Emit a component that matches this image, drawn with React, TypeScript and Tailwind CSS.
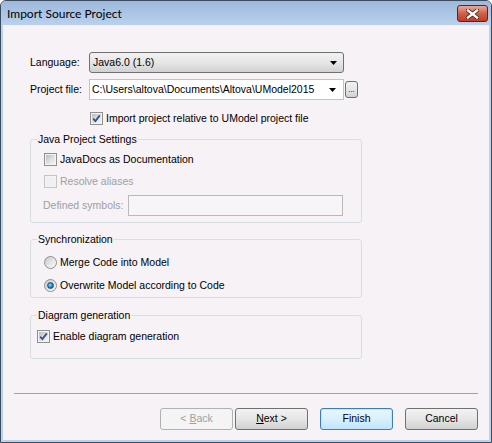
import type { ReactNode } from "react";

const btnFace =
  "bg-linear-to-b from-[#f2f2f2] via-[#e6e6e6] to-[#d1d1d1] border border-[#707070] rounded-[3px]";

function CheckBox({ checked = false, disabled = false }: { checked?: boolean; disabled?: boolean }) {
  return (
    <span
      className={`flex h-[13px] w-[13px] shrink-0 items-center justify-center border ${
        disabled ? "border-[#c5c5c5] bg-[#f4f4f4]" : "border-[#8e8f8f] bg-[#f4f4f4]"
      }`}
    >
      <span
        className={`flex h-[9px] w-[9px] items-center justify-center ${
          disabled ? "bg-[#f0f0f0]" : "bg-linear-to-br from-[#b7bbbf] via-[#dcdedf] to-[#f5f5f5]"
        }`}
      >
        {checked && (
          <svg width="9" height="9" viewBox="0 0 9 9">
            <path d="M1.2 4.6 L3.4 7 L7.8 1.4" fill="none" stroke="#3c4f86" strokeWidth="1.8" />
          </svg>
        )}
      </span>
    </span>
  );
}

function Radio({ checked = false }: { checked?: boolean }) {
  return (
    <span className="flex h-[13px] w-[13px] shrink-0 items-center justify-center rounded-full border border-[#8e8f8f] bg-linear-to-br from-[#c4c7ca] via-[#e4e5e6] to-[#fbfbfb]">
      {checked && (
        <span className="h-[7px] w-[7px] rounded-full border border-[#1e4a73] bg-[radial-gradient(circle_at_40%_40%,#9fe0ff_0%,#2b8fd0_45%,#0b4a83_100%)]" />
      )}
    </span>
  );
}

function Group({ title, children, className = "" }: { title: string; children: ReactNode; className?: string }) {
  return (
    <fieldset className={`w-[332px] shrink-0 rounded-[3px] border border-[#d5dfe5] ${className}`}>
      <legend className="ml-[6px] px-[1px] leading-[13px]">{title}</legend>
      {children}
    </fieldset>
  );
}

function DialogButton({
  children,
  variant = "normal",
  className = "",
}: {
  children: ReactNode;
  variant?: "normal" | "default" | "disabled";
  className?: string;
}) {
  const look =
    variant === "disabled"
      ? "border border-[#adb2b5] rounded-[3px] bg-[#f4f4f4] text-[#a0a0a0]"
      : variant === "default"
        ? "border border-[#3c7fb1] rounded-[3px] bg-linear-to-b from-[#eaf6fd] via-[#d9f0fc] to-[#bee6fd] shadow-[inset_0_0_0_1px_#c4e5f6]"
        : btnFace;
  return (
    <button type="button" className={`flex h-[22px] w-[73px] items-center justify-center ${look} ${className}`}>
      {children}
    </button>
  );
}

export default function App() {
  return (
    <div className="flex h-[443px] w-[492px] flex-col overflow-hidden rounded-t-[6px] border border-[#3b4b60] bg-[#bcd3ee] font-['Liberation_Sans',Arial,sans-serif] text-[10.5px] text-black">
      {/* title bar */}
      <div className="flex h-[24px] shrink-0 items-start justify-between bg-linear-to-b from-[#9db8db] to-[#b9d1ee] pl-[6px] pr-[3px]">
        <span className="pt-[5px] font-['Lato',sans-serif] text-[12px] leading-[15px] text-black">Import Source Project</span>
        <div className="mt-[4px] flex h-[17px] w-[31px] items-center justify-center rounded-[3px] border border-[#5e2417] bg-linear-to-b from-[#e8a898] via-[#d0604a] to-[#c23b22]">
          <svg width="13" height="10" viewBox="0 0 13 10">
            <path d="M2 1.5 L11 8.5 M11 1.5 L2 8.5" stroke="#4a1a10" strokeWidth="4" strokeLinecap="square" />
            <path d="M2 1.5 L11 8.5 M11 1.5 L2 8.5" stroke="#ffffff" strokeWidth="2.4" strokeLinecap="square" />
          </svg>
        </div>
      </div>

      {/* client area */}
      <div className="mx-[2px] mb-[2px] flex flex-1 flex-col bg-[#f6f2f6]">
        <div className="flex shrink-0 flex-col pl-[27px] pt-[27px]">
          <div className="flex h-[21px] items-center">
            <span className="w-[59px]">Language:</span>
            <div className={`flex h-[21px] w-[255px] items-center justify-between pl-[3px] pr-[6px] ${btnFace}`}>
              <span>Java6.0 (1.6)</span>
              <svg width="7" height="4" viewBox="0 0 7 4">
                <path d="M0 0 H7 L3.5 4 Z" fill="#000" />
              </svg>
            </div>
          </div>

          <div className="mt-[6px] flex h-[21px] items-center">
            <span className="w-[59px]">Project file:</span>
            <div className="flex h-[21px] w-[255px] items-center border border-[#c0c4c8] bg-white pl-[2px] pr-[7px]">
              <span className="w-[229px] overflow-hidden whitespace-nowrap">
                C:\Users\altova\Documents\Altova\UModel2015
              </span>
              <svg width="7" height="4" viewBox="0 0 7 4" className="ml-auto shrink-0">
                <path d="M0 0 H7 L3.5 4 Z" fill="#000" />
              </svg>
            </div>
            <div className={`ml-[1px] flex h-[17px] w-[13px] items-end justify-center overflow-hidden pb-[3px] text-[8px] leading-none ${btnFace}`}>
              ...
            </div>
          </div>

          <div className="mt-[12px] flex h-[13px] items-center gap-[3px] pl-[60px]">
            <CheckBox checked />
            <span>Import project relative to UModel project file</span>
          </div>

          <Group title="Java Project Settings" className="mt-[8px]">
            <div className="mt-[7px] flex h-[13px] items-center gap-[3px] pl-[13px]">
              <CheckBox />
              <span>JavaDocs as Documentation</span>
            </div>
            <div className="mt-[9px] flex h-[13px] items-center gap-[3px] pl-[13px] text-[#a0a0a0]">
              <CheckBox disabled />
              <span>Resolve aliases</span>
            </div>
            <div className="mt-[7px] flex h-[21px] items-center pl-[12px] text-[#a0a0a0]">
              <span className="w-[85px]">Defined symbols:</span>
              <div className="h-[21px] w-[215px] border border-[#b9b9b9] bg-[#f7f5f7]" />
            </div>
            <div className="h-[6px]" />
          </Group>

          <Group title="Synchronization" className="mt-[10px]">
            <div className="mt-[10px] flex h-[13px] items-center gap-[3px] pl-[13px]">
              <Radio />
              <span>Merge Code into Model</span>
            </div>
            <div className="mt-[10px] flex h-[13px] items-center gap-[3px] pl-[13px]">
              <Radio checked />
              <span>Overwrite Model according to Code</span>
            </div>
            <div className="h-[5px]" />
          </Group>

          <Group title="Diagram generation" className="mt-[11px]">
            <div className="mt-[8px] flex h-[13px] items-center gap-[3px] pl-[6px]">
              <CheckBox checked />
              <span>Enable diagram generation</span>
            </div>
            <div className="h-[15px]" />
          </Group>
        </div>

        <div className="mt-auto flex flex-col pb-[10px]">
          <div className="mx-[11px] border-t border-[#a0a0a0]" />
          <div className="mt-[14px] flex justify-end pr-[11px]">
            <DialogButton variant="disabled">
              &lt; <span className="ml-[3px] underline">B</span>ack
            </DialogButton>
            <DialogButton className="ml-[2px]">
              <span className="underline">N</span>ext &gt;
            </DialogButton>
            <DialogButton variant="default" className="ml-[12px]">
              Finish
            </DialogButton>
            <DialogButton className="ml-[12px]">Cancel</DialogButton>
          </div>
        </div>
      </div>
    </div>
  );
}
